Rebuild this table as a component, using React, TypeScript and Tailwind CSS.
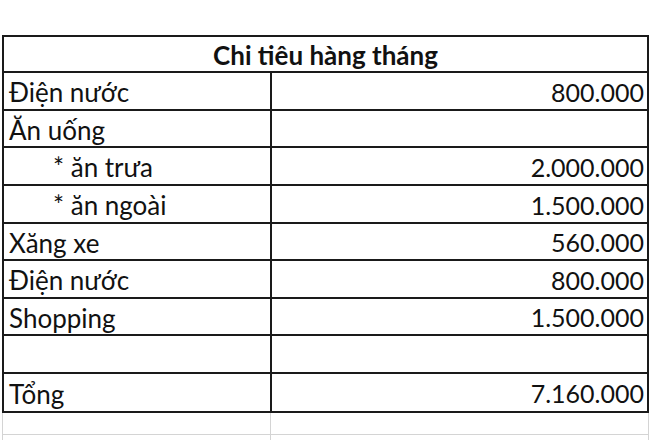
import React from 'react';

type Row = { label: string; value?: string; indent?: boolean; h: string };

// row heights alternate 38/37 so the lines land where the sheet's lines do
const rows: Row[] = [
  { label: 'Điện nước', value: '800.000', h: 'h-[38px]' },
  { label: 'Ăn uống', h: 'h-[37px]' },
  { label: '* ăn trưa', value: '2.000.000', indent: true, h: 'h-[38px]' },
  { label: '* ăn ngoài', value: '1.500.000', indent: true, h: 'h-[38px]' },
  { label: 'Xăng xe', value: '560.000', h: 'h-[37px]' },
  { label: 'Điện nước', value: '800.000', h: 'h-[38px]' },
  { label: 'Shopping', value: '1.500.000', h: 'h-[37px]' },
  { label: '', h: 'h-[38px]' },
  { label: 'Tổng', value: '7.160.000', h: 'h-[37px]' },
];

export default function App() {
  return (
    <div
      className="h-[440px] w-[650px] overflow-hidden bg-white text-[26px] leading-none text-[#111]"
      style={{ fontFamily: 'Lato, "Noto Sans", sans-serif' }}
    >
      <div className="h-[35px]" />
      <div className="ml-[2px] w-[647px] border-2 border-[#1a1a1a]">
        <div className="flex h-[36px] items-center justify-center border-b-2 border-[#1a1a1a] pt-[2px] font-bold">
          Chi tiêu hàng tháng
        </div>
        {rows.map((r, i) => (
          <div
            key={i}
            className={`grid grid-cols-[268px_1fr] ${r.h} ${
              i < rows.length - 1 ? 'border-b-2 border-[#1a1a1a]' : ''
            }`}
          >
            <div
              className={`flex items-center border-r-2 border-[#1a1a1a] pt-[2px] ${
                r.indent ? 'pl-[49px]' : 'pl-[5px]'
              }`}
            >
              {r.label}
            </div>
            <div className="flex items-center justify-end pr-[3px] pt-[2px] text-[25px]">{r.value}</div>
          </div>
        ))}
      </div>
      {/* empty sheet gridlines under the table */}
      <div className="ml-[2px] grid w-[647px] grid-cols-[268px_1fr] border-x border-[#d4d4d4]">
        <div className="h-[22px] border-b border-r border-[#d4d4d4]" />
        <div className="h-[22px] border-b border-[#d4d4d4]" />
        <div className="h-[22px] border-r border-[#d4d4d4]" />
        <div className="h-[22px]" />
      </div>
    </div>
  );
}
